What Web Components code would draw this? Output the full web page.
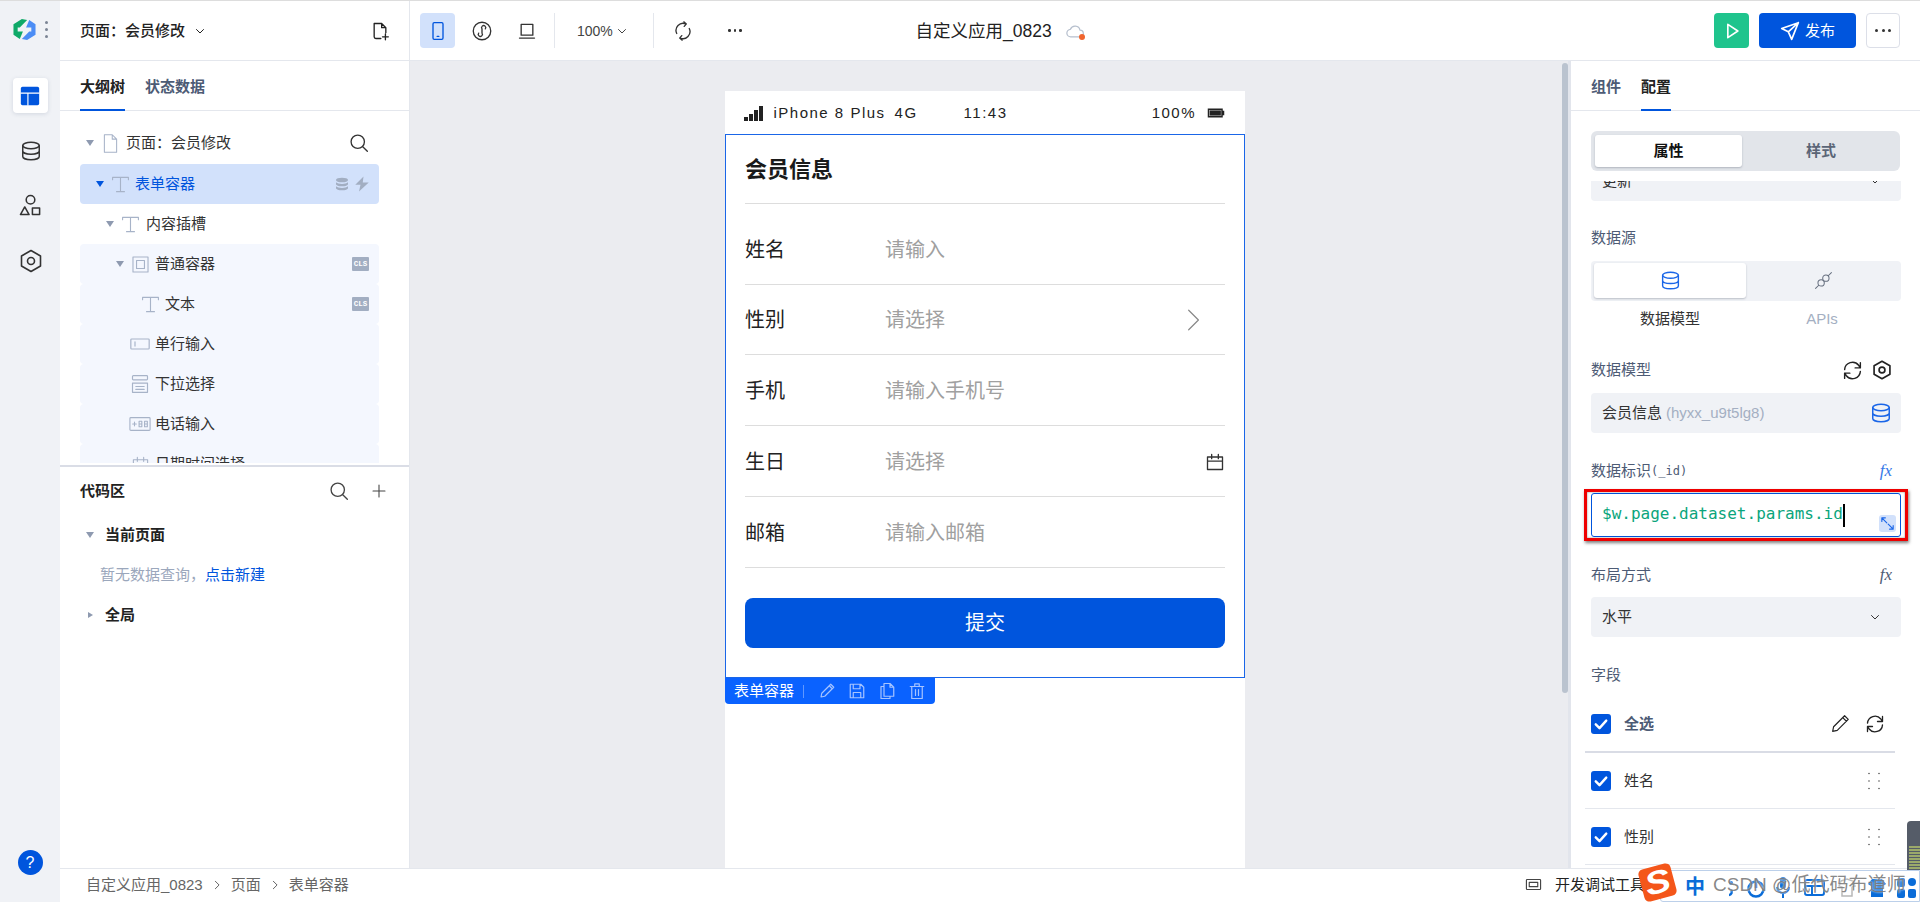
<!DOCTYPE html>
<html lang="zh">
<head>
<meta charset="utf-8">
<title>自定义应用_0823</title>
<style>
  html, body { margin: 0; height: 100%; overflow: hidden; background: #fff; }
  body { font: 15px/20px "Liberation Sans", "Noto Sans CJK SC", sans-serif; color: #222; }
</style>
</head>
<body>
<ide-app></ide-app>

<script>
// icon set, all on a 24x24 box
const ICONS = {
  layout: '<rect x="1" y="1" width="22" height="22" rx="2" fill="#0055dd" stroke="none"/><path d="M1 8.5H23M9.5 8.5V23" stroke="#fff" stroke-width="1.4"/>',
  db: '<ellipse cx="12" cy="6" rx="9" ry="3.5"/><path d="M3 6v12c0 2 4 3.5 9 3.5s9-1.5 9-3.5V6M3 12c0 2 4 3.5 9 3.5s9-1.5 9-3.5"/>',
  dbfill: '<g fill="currentColor" stroke="none"><ellipse cx="12" cy="6" rx="9" ry="3.5"/><path d="M3 9.5c2 2 5 2.5 9 2.5s7-.5 9-2.5V12c0 2-4 3.5-9 3.5S3 14 3 12zM3 15.5c2 2 5 2.5 9 2.5s7-.5 9-2.5V18c0 2-4 3.5-9 3.5S3 20 3 18z"/></g>',
  shapes: '<circle cx="12" cy="6" r="4.5"/><path d="M6 13.5l4.5 8h-9zM14 14.5h7.5v7H14z"/>',
  hex: '<path d="M12 1.5l9.500 5.500v10L12 22.500 2.500 17V7z"/><circle cx="12" cy="12" r="3.500"/>',
  fileplus: '<path d="M13 21H7a2 2 0 0 1-2-2V3h9l5 5v6M14 3v5h5M15 19h7M18.5 15.5v7"/>',
  file: '<path d="M5 2h9l5 5v15H5zM14 2v5h5"/>',
  search: '<circle cx="10.5" cy="10.5" r="8"/><path d="M16.5 16.5L22 22"/>',
  plus: '<path d="M12 3v18M3 12h18"/>',
  down: '<path d="M5 9l7 7 7-7"/>',
  right: '<path d="M8 3l9 9-9 9"/>',
  tee: '<path d="M2 6V3h20v3M12 3v18M7 21h10"/>',
  box: '<rect x="2.5" y="2.5" width="19" height="19"/><rect x="7" y="7" width="10" height="10"/>',
  input: '<rect x="1" y="6" width="22" height="12" rx="1"/><path d="M6 9.5v5"/>',
  select: '<rect x="3" y="2" width="18" height="5" rx="1"/><path d="M3 11h18v11H3zM7 15h10M7 18.500h10"/>',
  tel: '<rect x="1" y="5" width="22" height="14" rx="1"/><path d="M4 12h4M6 10v4M11 9h3v6h-3zM11 12h3M17 9h3v6h-3zM17 12h3"/>',
  date: '<path d="M3 6h18v15H3zM3 11h18M8 3v5M16 3v5"/>',
  bolt: '<path fill="currentColor" stroke="none" d="M14 2L3 13h7l-2 9 13-12h-8z"/>',
  phone: '<rect x="6" y="2" width="12" height="20" rx="1.5"/><path d="M11 18.5h2"/>',
  applet: '<circle cx="12" cy="12" r="10.5"/><path d="M8 14.5a2.500 2.500 0 1 0 4 0V9.500a2.500 2.500 0 1 1 4 0"/>',
  laptop: '<path d="M5 4h14v13H5zM3 20.500h18"/>',
  refresh: '<path d="M4.500 15a8.500 8.500 0 0 1 11-11.500M19.500 9a8.500 8.500 0 0 1-11 11.500M13 1l3 2.500-2.500 3M11 23l-3-2.500 2.500-3"/>',
  sync: '<path d="M3 11a9 9 0 0 1 16-5l2 3M21 13a9 9 0 0 1-16 5l-2-3M21 3v6h-6M3 21v-6h6"/>',
  cloud: '<path d="M7 19a4.500 4.500 0 0 1-.5-9 6 6 0 0 1 11.500 1 4 4 0 0 1 0 8z"/>',
  play: '<path d="M7 4l12 8-12 8z"/>',
  send: '<path d="M22 2L2 9l8 4 4 9zM22 2L10 13"/>',
  link: '<circle cx="9" cy="15" r="4"/><circle cx="15" cy="9" r="4"/><path d="M2 22l4-4M18 6l4-4"/>',
  expand: '<path d="M4 4l7 7M4 4v5M4 4h5M20 20l-7-7M20 20v-5M20 20h-5"/>',
  pencil: '<path d="M4 20l1-5L17 3l4 4L9 19zM15 5l4 4"/>',
  save: '<path d="M3 3h14l4 4v14H3zM7 3v6h9V3M7 21v-7h10v7"/>',
  copy: '<path d="M8 2h8l5 5v12H8zM16 2v5h5M8 6H4v16h12v-3"/>',
  trash: '<path d="M3 6h18M9 6V2.500h6V6M5 6v16h14V6M10 10v8M14 10v8"/>',
  grip: '<g fill="currentColor" stroke="none"><circle cx="6" cy="3" r=".9"/><circle cx="18" cy="3" r=".9"/><circle cx="6" cy="12" r=".9"/><circle cx="18" cy="12" r=".9"/><circle cx="6" cy="21" r=".9"/><circle cx="18" cy="21" r=".9"/></g>',
  check: '<path d="M5 12.500l5 5 9-10" stroke="#fff" stroke-width="3.200"/>',
  debug: '<rect x="2" y="5" width="20" height="14" rx="1"/><path d="M6 9h12v6H6z"/>',
  battery: '<path fill="currentColor" stroke="none" d="M1 6h20v3h2v6h-2v3H1zM3 8v8h16V8z"/><rect x="3.500" y="8.500" width="15" height="7" fill="currentColor" stroke="none"/>'
};

class UiIcon extends HTMLElement {
  connectedCallback() {
    const size = this.getAttribute('size') || 20;
    const weight = this.getAttribute('weight') || 1.6;
    const name = this.getAttribute('name');
    this.attachShadow({ mode: 'open' }).innerHTML = `
      <style>:host { display: inline-flex; flex: none; width: ${size}px; height: ${size}px; } svg { display: block; width: 100%; height: 100%; }</style>
      <svg viewBox="0 0 24 24" fill="none" stroke="currentColor" stroke-width="${weight}" stroke-linejoin="round" stroke-linecap="round">${ICONS[name] || ''}</svg>`;
  }
}

// left icon column
class IdeRail extends HTMLElement {
  connectedCallback() {
    this.attachShadow({ mode: 'open' }).innerHTML = `
      <style>
        :host { display: flex; flex-direction: column; align-items: center; background: #f0f2f6; border-top: 1px solid #dddddd; box-sizing: border-box; height: 100%; color: #333; padding-top: 17px; }
        .logo { display: flex; align-items: center; gap: 8px; height: 22px; }
        .dots { display: flex; flex-direction: column; gap: 4px; }
        .dots i { width: 3px; height: 3px; border-radius: 50%; background: #7b8494; }
        .tile { width: 35px; height: 35px; margin-top: 38px; background: #fff; border-radius: 4px; box-shadow: 0 1px 4px rgba(40,60,100,.15); display: flex; align-items: center; justify-content: center; }
        .item { margin-top: 18px; height: 37px; display: flex; align-items: center; margin-left: 1px; }
        .tile + .item { margin-top: 19px; }
        .help { margin-top: auto; margin-bottom: 27px; width: 25px; height: 25px; border-radius: 50%; background: #0055dd; color: #fff; text-align: center; font-size: 16px; line-height: 25px; }
      </style>
      <div class="logo">
        <svg width="25" height="21" viewBox="0 0 23 20">
          <path fill="#4c8df5" d="M22 5V15L14 20L9 19L16 12H18V8H13L16 1Z"/>
          <path fill="#0fa968" d="M1 5L9 0L14 1L7 8H5V12H10L7 19L1 15Z"/>
        </svg>
        <span class="dots"><i></i><i></i><i></i></span>
      </div>
      <div class="tile"><ui-icon name="layout" size="20"></ui-icon></div>
      <div class="item"><ui-icon name="db" size="22"></ui-icon></div>
      <div class="item"><ui-icon name="shapes" size="23"></ui-icon></div>
      <div class="item"><ui-icon name="hex" size="24"></ui-icon></div>
      <div class="help">?</div>`;
  }
}

class IdeTopbar extends HTMLElement {
  connectedCallback() {
    this.attachShadow({ mode: 'open' }).innerHTML = `
      <style>
        :host { display: flex; align-items: center; box-sizing: border-box; height: 61px; background: #fff; border-top: 1px solid #dddddd; border-bottom: 1px solid #e4e7ed; color: #333; }
        .page { display: flex; align-items: center; width: 350px; height: 100%; box-sizing: border-box; border-right: 1px solid #e4e7ed; padding: 0 19px 0 20px; font-weight: 500; color: #222; }
        .page span { margin-right: 9px; }
        .page .add { margin-left: auto; }
        .tools { display: flex; align-items: center; padding-left: 10px; }
        .on { width: 35px; height: 35px; background: #d2e1fb; border-radius: 4px; display: flex; align-items: center; justify-content: center; color: #0055dd; }
        .sep { width: 1px; height: 35px; background: #e4e7ed; }
        .zoom { display: flex; align-items: center; gap: 3px; width: 98px; padding-left: 22px; box-sizing: border-box; font-size: 14px; color: #444; }
        .more { display: flex; gap: 3px; }
        .more i { width: 2.500px; height: 2.500px; border-radius: 50%; background: currentColor; }
        h1 { margin: 0 0 0 174px; font-size: 17.500px; font-weight: 400; color: #222; white-space: nowrap; }
        .cloud { position: relative; margin-left: 13px; color: #b6bfcd; display: flex; }
        .cloud i { position: absolute; right: 0; bottom: 1px; width: 6px; height: 6px; border-radius: 50%; background: #f0652f; }
        .actions { margin-left: auto; display: flex; align-items: center; padding-right: 20px; gap: 10px; }
        .run, .pub, .dots { height: 35px; box-sizing: border-box; border-radius: 4px; display: flex; align-items: center; justify-content: center; }
        .run { width: 35px; background: #1fc48d; color: #fff; }
        .pub { width: 97px; background: #0055dd; color: #fff; gap: 5px; }
        .dots { width: 34px; border: 1px solid #dcdfe8; color: #333; }
      </style>
      <div class="page"><span>页面：会员修改</span><ui-icon name="down" size="12" weight="2"></ui-icon><ui-icon class="add" name="fileplus" size="20"></ui-icon></div>
      <div class="tools">
        <div class="on"><ui-icon name="phone" size="20"></ui-icon></div>
        <ui-icon name="applet" size="20" style="margin-left:17px"></ui-icon>
        <ui-icon name="laptop" size="20" style="margin-left:25px"></ui-icon>
        <div class="sep" style="margin-left:17px"></div>
        <div class="zoom">100%<ui-icon name="down" size="12" weight="2"></ui-icon></div>
        <div class="sep"></div>
        <ui-icon name="refresh" size="20" style="margin-left:19px"></ui-icon>
        <div class="more" style="margin-left:35px"><i></i><i></i><i></i></div>
      </div>
      <h1>自定义应用_0823</h1>
      <div class="cloud"><ui-icon name="cloud" size="20" weight="1.500"></ui-icon><i></i></div>
      <div class="actions">
        <div class="run"><ui-icon name="play" size="20" weight="2"></ui-icon></div>
        <div class="pub"><ui-icon name="send" size="20" weight="2"></ui-icon>发布</div>
        <div class="dots"><div style="display:flex;gap:3.500px"><i style="width:3px;height:3px;border-radius:50%;background:#333"></i><i style="width:3px;height:3px;border-radius:50%;background:#333"></i><i style="width:3px;height:3px;border-radius:50%;background:#333"></i></div></div>
      </div>`;
  }
}

// one line of the outline tree
class TreeRow extends HTMLElement {
  connectedCallback() {
    const pad = this.getAttribute('pad') || 0;
    const box = this.getAttribute('box') || 30;
    const icon = this.getAttribute('icon');
    const caret = this.hasAttribute('caret');
    this.attachShadow({ mode: 'open' }).innerHTML = `
      <style>
        :host { display: flex; align-items: center; height: 40px; border-radius: 4px; padding-left: ${pad}px; color: #333; }
        :host([kind="sel"]) { background: #d2e1fb; color: #0055dd; }
        :host([kind="sub"]) { background: #f4f7fe; }
        .caret { width: 10px; flex: none; display: flex; justify-content: center; }
        .caret i { border: 4px solid transparent; border-top: 6px solid #8e9ab0; border-bottom: 0; border-left-width: 4.500px; border-right-width: 4.500px; }
        :host([kind="sel"]) .caret i { border-top-color: #0055dd; }
        .ic { width: ${box}px; flex: none; display: flex; justify-content: center; color: #a7b3c8; }
        .end { margin-left: auto; display: flex; align-items: center; gap: 3px; padding-right: 10px; color: #a2aec2; }
      </style>
      <span class="caret">${caret ? '<i></i>' : ''}</span>
      <span class="ic"><ui-icon name="${icon}" size="${this.getAttribute('size') || 19}" weight="${this.getAttribute('weight') || 1.400}"></ui-icon></span>
      <slot></slot>
      <span class="end"><slot name="end"></slot></span>`;
  }
}

class ClsBadge extends HTMLElement {
  connectedCallback() {
    this.attachShadow({ mode: 'open' }).innerHTML = `
      <style>:host { display: block; width: 17px; height: 14px; border-radius: 1px; background: #a2aec2; color: #fff; font: bold 7.500px/14px "Liberation Mono", monospace; text-align: center; }</style>CLS`;
  }
}

class OutlinePanel extends HTMLElement {
  connectedCallback() {
    this.attachShadow({ mode: 'open' }).innerHTML = `
      <style>
        :host { display: flex; flex-direction: column; background: #fff; border-right: 1px solid #e4e7ed; min-height: 0; overflow: hidden; }
        .tabs { display: flex; gap: 20px; height: 50px; box-sizing: border-box; padding: 0 20px; border-bottom: 1px solid #e4e7ed; flex: none; }
        .tabs span { line-height: 52px; font-weight: 700; color: #4d5b75; height: 50px; box-sizing: border-box; }
        .tabs .on { color: #222; border-bottom: 2px solid #0055dd; }
        .tree { height: 352px; overflow: hidden; flex: none; padding: 12px 30px 0 20px; box-sizing: border-box; }
        .tree tree-row[first] { margin-bottom: 1px; }
        .code { flex: 1; margin-top: 2px; border-top: 2px solid #dadde6; }
        .code-head { display: flex; align-items: center; height: 48px; padding: 0 22px 0 20px; font-weight: 700; color: #222; }
        .code-head .s { margin-left: auto; color: #444; }
        .line { display: flex; align-items: center; height: 40px; padding-left: 25px; font-weight: 700; color: #222; }
        .line i { flex: none; width: 10px; display: flex; justify-content: center; margin-right: 10px; }
        .tri { border-left: 4.500px solid transparent; border-right: 4.500px solid transparent; border-top: 6px solid #8e9ab0; }
        .side { border-top: 3.500px solid transparent; border-bottom: 3.500px solid transparent; border-left: 5px solid #8e9ab0; }
        .empty { height: 40px; line-height: 40px; padding-left: 40px; color: #9ba7bc; }
        .empty b { font-weight: 400; color: #0055dd; }
      </style>
      <div class="tabs"><span class="on">大纲树</span><span>状态数据</span></div>
      <div class="tree">
        <tree-row first pad="5" box="31" caret icon="file" size="21" weight="1.200">页面：会员修改<ui-icon slot="end" name="search" size="20" style="color:#333"></ui-icon></tree-row>
        <tree-row kind="sel" pad="15" caret icon="tee">表单容器<ui-icon slot="end" name="dbfill" size="16"></ui-icon><ui-icon slot="end" name="bolt" size="18" style="margin-right:-2px"></ui-icon></tree-row>
        <tree-row pad="25" box="31" caret icon="tee">内容插槽</tree-row>
        <tree-row kind="sub" pad="35" caret icon="box">普通容器<cls-badge slot="end"></cls-badge></tree-row>
        <tree-row kind="sub" pad="45" icon="tee">文本<cls-badge slot="end"></cls-badge></tree-row>
        <tree-row kind="sub" pad="35" icon="input" size="20">单行输入</tree-row>
        <tree-row kind="sub" pad="35" icon="select" size="20">下拉选择</tree-row>
        <tree-row kind="sub" pad="35" icon="tel" size="22" weight="1.200">电话输入</tree-row>
        <tree-row kind="sub" pad="35" icon="date" size="19">日期时间选择</tree-row>
      </div>
      <div class="code">
        <div class="code-head">代码区<ui-icon class="s" name="search" size="20"></ui-icon><ui-icon name="plus" size="16" style="margin-left:22px;color:#444"></ui-icon></div>
        <div class="line"><i><span class="tri"></span></i>当前页面</div>
        <div class="empty">暂无数据查询，<b>点击新建</b></div>
        <div class="line"><i><span class="side"></span></i>全局</div>
      </div>`;
  }
}

class FormField extends HTMLElement {
  connectedCallback() {
    const h = this.getAttribute('h') || 71;
    const top = this.getAttribute('top') || 2;
    this.attachShadow({ mode: 'open' }).innerHTML = `
      <style>
        :host { display: flex; align-items: center; box-sizing: border-box; height: ${h}px; padding-top: ${top}px; border-bottom: 1px solid #dddddd; font-size: 20px; color: #222; }
        .name { width: 140px; }
        .hint { color: #a0a0a0; }
        ::slotted(*) { margin-left: auto; }
      </style>
      <span class="name">${this.getAttribute('name')}</span>
      <span class="hint">${this.getAttribute('hint')}</span>
      <slot></slot>`;
  }
}

class PhoneForm extends HTMLElement {
  connectedCallback() {
    this.attachShadow({ mode: 'open' }).innerHTML = `
      <style>
        :host { display: block; width: 520px; flex: none; background: #fff; color: #222; }
        .status { display: flex; align-items: center; height: 43px; padding: 1px 20px 0 19px; box-sizing: border-box; font-size: 15px; letter-spacing: 1.500px; color: #222; }
        .bars { display: flex; align-items: flex-end; gap: 1.500px; margin-right: 11px; height: 15px; }
        .bars i { width: 3.500px; background: #222; }
        .form { box-sizing: border-box; height: 544px; border: 1px solid #1a66e8; padding: 0 19px; }
        .title { height: 69px; box-sizing: border-box; border-bottom: 1px solid #dddddd; font-size: 22px; line-height: 69px; font-weight: 700; color: #1a1a1a; }
        .submit { margin-top: 30px; height: 50px; border-radius: 8px; background: #0055dd; color: #fff; font-size: 20px; line-height: 50px; text-align: center; }
        .bar { display: flex; align-items: center; width: 210px; height: 26px; box-sizing: border-box; padding-left: 9px; background: #0a62ff; border-radius: 0 0 4px 4px; color: #fff; white-space: nowrap; }
        .bar s { width: 1px; height: 13px; background: rgba(255,255,255,.35); margin: 0 14px 0 9px; }
        .bar ui-icon { color: #a6c4ff; margin-right: 12px; }
        .bar ui-icon:last-child { margin-right: 0; }
      </style>
      <div class="status">
        <span class="bars"><i style="height:4px"></i><i style="height:7px"></i><i style="height:11px"></i><i style="height:15px"></i></span>
        <span>iPhone 8 Plus</span><span style="margin-left:9px">4G</span><span style="margin-left:46px">11:43</span>
        <span style="margin-left:auto">100%</span><ui-icon name="battery" size="18" style="margin-left:11px"></ui-icon>
      </div>
      <div class="form">
        <div class="title">会员信息</div>
        <form-field h="81" top="11" name="姓名" hint="请输入"></form-field>
        <form-field h="70" top="1" name="性别" hint="请选择"><ui-icon name="right" size="26" weight="1.100" style="color:#888;margin-right:19px"></ui-icon></form-field>
        <form-field name="手机" hint="请输入手机号"></form-field>
        <form-field name="生日" hint="请选择"><ui-icon name="date" size="20" style="color:#333"></ui-icon></form-field>
        <form-field top="1" name="邮箱" hint="请输入邮箱"></form-field>
        <div class="submit">提交</div>
      </div>
      <div class="bar">表单容器<s></s><ui-icon name="pencil" size="18"></ui-icon><ui-icon name="save" size="18"></ui-icon><ui-icon name="copy" size="18"></ui-icon><ui-icon name="trash" size="18"></ui-icon></div>`;
  }
}

class CanvasStage extends HTMLElement {
  connectedCallback() {
    this.attachShadow({ mode: 'open' }).innerHTML = `
      <style>
        :host { display: flex; justify-content: center; position: relative; background: #ebecf0; padding: 30px 11px 0 0; overflow: hidden; min-height: 0; }
        .thumb { position: absolute; top: 2px; right: 3px; width: 6px; height: 630px; border-radius: 3px; background: #bac3cf; }
        .edge { position: absolute; top: 0; bottom: 0; right: 0; width: 3px; background: #e2e5ec; }
      </style>
      <phone-form></phone-form><div class="edge"></div><div class="thumb"></div>`;
  }
}

// label line + control, used all over the config panel
class ConfigLabel extends HTMLElement {
  connectedCallback() {
    this.attachShadow({ mode: 'open' }).innerHTML = `
      <style>
        :host { display: flex; align-items: center; height: 20px; color: #4d5b75; }
        .end { margin-left: auto; display: flex; align-items: center; gap: 9px; padding-right: 9px; }
      </style>
      <slot></slot><span class="end"><slot name="end"></slot></span>`;
  }
}

class FieldRow extends HTMLElement {
  connectedCallback() {
    this.attachShadow({ mode: 'open' }).innerHTML = `
      <style>
        :host { display: flex; align-items: center; box-sizing: border-box; height: 56px; margin-left: -6px; width: 310px; padding: 0 10px 0 6px; border-bottom: 1px solid #e4e7ed; color: #333; }
        :host([head]) { color: #4d5b75; font-weight: 700; border-bottom: 2px solid #d9dce5; }
        .box { width: 20px; height: 20px; border-radius: 3px; background: #0055dd; margin-right: 13px; display: flex; align-items: center; justify-content: center; }
        .end { margin-left: auto; display: flex; align-items: center; gap: 14px; }
      </style>
      <span class="box"><ui-icon name="check" size="18"></ui-icon></span>
      <slot></slot><span class="end"><slot name="end"></slot></span>`;
  }
}

class ConfigPanel extends HTMLElement {
  connectedCallback() {
    this.attachShadow({ mode: 'open' }).innerHTML = `
      <style>
        :host { display: flex; flex-direction: column; background: #fff; min-height: 0; overflow: hidden; color: #333; }
        .tabs { display: flex; gap: 20px; height: 50px; box-sizing: border-box; padding: 0 20px; border-bottom: 1px solid #e4e7ed; flex: none; }
        .tabs span { line-height: 52px; font-weight: 700; color: #4d5b75; height: 50px; box-sizing: border-box; }
        .tabs .on { color: #222; border-bottom: 2px solid #0055dd; }
        .mode { flex: none; margin: 20px 20px 10px; width: 309px; height: 40px; box-sizing: border-box; padding: 4px 0 4px 4px; background: #e2e5ea; border-radius: 6px; display: flex; font-weight: 700; color: #5b6577; }
        .mode span { flex: 1; text-align: center; line-height: 32px; }
        .mode .on { flex: none; width: 147px; background: #fff; border-radius: 3px; color: #111; box-shadow: 0 1px 2px rgba(60,70,90,.3); }
        .scroll { flex: 1; overflow: hidden; padding: 0 19px 0 20px; min-height: 0; }
        .sel, .ctl { display: flex; align-items: center; height: 40px; box-sizing: border-box; padding: 0 11px; border-radius: 4px; background: #f0f2f6; color: #333; }
        .sel ui-icon, .ctl ui-icon { margin-left: auto; }
        .sel ui-icon { margin-right: 9px; }
        .tag { color: #a4afc2; margin-left: 4px; }
        .seg { display: flex; height: 40px; box-sizing: border-box; background: #f0f2f6; border-radius: 4px; padding: 2px 0 3px 3px; }
        .seg span { flex: 1; display: flex; align-items: center; justify-content: center; color: #666f7f; }
        .seg .on { flex: none; width: 152px; background: #fff; border-radius: 3px; color: #1a66e8; box-shadow: 0 1px 2px rgba(60,70,90,.3); }
        .caps { display: flex; margin-top: 8px; height: 20px; }
        .caps span { flex: 1; text-align: center; }
        .caps .off { color: #a4afc2; padding-right: 6px; }
        .fx { font: italic 17px/20px "Liberation Serif", serif; color: #4d5b75; }
        .mono { font: 12px/20px "DejaVu Sans Mono", monospace; }
        .code { position: relative; margin-top: 12px; }
        .code .frame { box-sizing: border-box; height: 44px; border: 1px solid #0055dd; border-radius: 3px; padding: 10px 10px 0; font: 16px/20px "DejaVu Sans Mono", monospace; color: #0aa57c; background: #fff; display: flex; align-items: flex-start; }
        .code .caret { width: 2px; height: 23px; background: #000; margin-left: 0; }
        .code .ring { position: absolute; inset: -4px -7px; border: 3px solid #ee0000; box-shadow: 1px 2px 3px rgba(0,0,0,.5), inset 0 0 2px rgba(0,0,0,.5); pointer-events: none; }
        .code .grow { position: absolute; right: 5px; bottom: 5px; width: 17px; height: 17px; border-radius: 3px; background: #d2e1fb; color: #1a66e8; display: flex; }
      </style>
      <div class="tabs"><span>组件</span><span class="on">配置</span></div>
      <div class="mode"><span class="on">属性</span><span>样式</span></div>
      <div class="scroll">
        <div class="sel" style="margin-top:-20px">更新<ui-icon name="down" size="12" weight="2"></ui-icon></div>
        <config-label style="margin-top:27px">数据源</config-label>
        <div class="seg" style="margin-top:13px"><span class="on"><ui-icon name="db" size="21"></ui-icon></span><span><ui-icon name="link" size="19" weight="1.300"></ui-icon></span></div>
        <div class="caps"><span style="flex:none;width:158px">数据模型</span><span class="off">APIs</span></div>
        <config-label style="margin-top:31px">数据模型<ui-icon slot="end" name="sync" size="21" style="color:#222"></ui-icon><ui-icon slot="end" name="hex" size="20" weight="2" style="color:#222"></ui-icon></config-label>
        <div class="ctl" style="margin-top:13px">会员信息<span class="tag">(hyxx_u9t5lg8)</span><ui-icon name="db" size="22" style="color:#1a66e8;margin-right:-2px"></ui-icon></div>
        <config-label style="margin-top:28px">数据标识<span class="mono">(_id)</span><span slot="end" class="fx" style="color:#3478e8">fx</span></config-label>
        <div class="code"><div class="frame"><span>$w.page.dataset.params.id</span><i class="caret"></i></div><span class="grow"><ui-icon name="expand" size="17"></ui-icon></span><div class="ring"></div></div>
        <config-label style="margin-top:28px">布局方式<span slot="end" class="fx">fx</span></config-label>
        <div class="sel" style="margin-top:12px">水平<ui-icon name="down" size="12" weight="2"></ui-icon></div>
        <config-label style="margin-top:28px">字段</config-label>
        <div style="margin-top:12px">
          <field-row head>全选<ui-icon slot="end" name="pencil" size="22" weight="1.300" style="color:#222"></ui-icon><ui-icon slot="end" name="sync" size="20" style="color:#222"></ui-icon></field-row>
          <field-row>姓名<ui-icon slot="end" name="grip" size="20" style="color:#444;margin-right:1px"></ui-icon></field-row>
          <field-row>性别<ui-icon slot="end" name="grip" size="20" style="color:#444;margin-right:1px"></ui-icon></field-row>
        </div>
      </div>`;
  }
}

class IdeStatusbar extends HTMLElement {
  connectedCallback() {
    this.attachShadow({ mode: 'open' }).innerHTML = `
      <style>
        :host { display: flex; align-items: center; box-sizing: border-box; height: 34px; padding: 0 275px 2px 26px; background: #fff; border-top: 1px solid #e4e7ed; color: #666; }
        ui-icon.g { margin: 0 9px; color: #666; }
        .tail { margin-left: auto; display: flex; align-items: center; gap: 13px; color: #222; }
      </style>
      <span>自定义应用_0823</span><ui-icon class="g" name="right" size="10" weight="2.400"></ui-icon>
      <span>页面</span><ui-icon class="g" name="right" size="10" weight="2.400"></ui-icon>
      <span>表单容器</span>
      <span class="tail"><ui-icon name="debug" size="17" style="color:#444"></ui-icon>开发调试工具</span>`;
  }
}

// input-method bar, watermark and the level meter sit on top of the app
class ImeOverlay extends HTMLElement {
  connectedCallback() {
    const blue = '#0a6cd8';
    this.attachShadow({ mode: 'open' }).innerHTML = `
      <style>
        :host { position: absolute; left: 0; top: 0; width: 1920px; height: 902px; pointer-events: none; display: block; }
        .meter { position: absolute; left: 1907px; top: 821px; width: 13px; height: 49px; background: #555c68; border-radius: 4px 0 0 0; display: flex; flex-direction: column; justify-content: flex-end; gap: 1px; padding: 0 0 1px 2px; box-sizing: border-box; }
        .meter i { height: 2px; width: 11px; background: #9ba96a; }
        .bar { position: absolute; left: 1660px; top: 870px; width: 260px; height: 32px; box-sizing: border-box; background: #fff; border: 1px solid #bcd0ea; border-radius: 3px 0 0 3px; }
        .s { position: absolute; left: 1641px; top: 866px; width: 33px; height: 33px; border-radius: 5px; background: #f4561a; transform: rotate(-15deg); color: #fff; font: italic 900 32px/33px "Liberation Sans", sans-serif; text-align: center; }
        .s span { display: inline-block; transform: scaleX(1.2); }
        .zh { position: absolute; left: 1685px; top: 874px; font: bold 20px/24px "Noto Sans CJK SC", sans-serif; color: ${blue}; }
        .ico { position: absolute; top: 876px; left: 1726px; }
        .wm { position: absolute; left: 1713px; top: 872px; font-size: 19px; line-height: 26px; color: rgba(105,105,105,.8); text-shadow: 0 0 2px #fff; white-space: nowrap; }
      </style>
      <div class="meter"><i></i><i></i><i></i><i></i><i></i><i></i><i></i><i></i></div>
      <div class="bar"></div>
      <div class="s"><span>S</span></div>
      <div class="zh">中</div>
      <svg class="ico" width="194" height="24" viewBox="0 0 194 24" fill="none" stroke="${blue}" stroke-width="2.500">
        <circle cx="5" cy="7" r="2" fill="${blue}" stroke="none"/><path d="M5 14c2 2 0 5-2 5" />
        <circle cx="30" cy="13" r="7.500"/><path d="M30 3v9" />
        <g transform="translate(-4)"><rect x="58" y="1" width="6" height="12" rx="3" fill="${blue}" stroke="none"/><path d="M55 11a6 6 0 0 0 12 0M61 17v5" stroke-width="2"/></g>
        <g transform="translate(-4)"><rect x="83" y="4" width="19" height="15" rx="2" stroke-width="2"/><path d="M83 10h19M90 10v9" stroke-width="2"/></g>
        <path d="M115 5l6-2 6 2 2 5-3 1v9h-10v-9l-3-1z" stroke="#b8b8b8" stroke-width="1.500"/>
        <g transform="translate(2)"><path d="M144 3h10l4 5-3 2v11h-12V10l-3-2z" fill="${blue}" stroke="none"/></g>
        <g transform="translate(4)" fill="${blue}" stroke="none"><rect x="167" y="2" width="8" height="9" rx="2"/><rect x="178" y="2" width="8" height="8" rx="4"/><rect x="167" y="13" width="8" height="9" rx="2"/><rect x="178" y="13" width="8" height="9" rx="2"/></g>
      </svg>
      <div class="wm">CSDN @低代码布道师</div>`;
  }
}

class IdeApp extends HTMLElement {
  connectedCallback() {
    this.attachShadow({ mode: 'open' }).innerHTML = `
      <style>
        :host { display: grid; position: relative; width: 1920px; height: 902px; overflow: hidden; grid-template-columns: 60px 350px 1fr 349px; grid-template-rows: 61px 1fr 34px; }
        ide-rail { grid-row: 1 / 4; }
        ide-topbar { grid-column: 2 / 5; }
        ide-statusbar { grid-column: 2 / 5; }
      </style>
      <ide-rail></ide-rail>
      <ide-topbar></ide-topbar>
      <outline-panel></outline-panel>
      <canvas-stage></canvas-stage>
      <config-panel></config-panel>
      <ide-statusbar></ide-statusbar>
      <ime-overlay></ime-overlay>`;
  }
}

customElements.define('ui-icon', UiIcon);
customElements.define('ide-rail', IdeRail);
customElements.define('ide-topbar', IdeTopbar);
customElements.define('tree-row', TreeRow);
customElements.define('cls-badge', ClsBadge);
customElements.define('outline-panel', OutlinePanel);
customElements.define('form-field', FormField);
customElements.define('phone-form', PhoneForm);
customElements.define('canvas-stage', CanvasStage);
customElements.define('config-label', ConfigLabel);
customElements.define('field-row', FieldRow);
customElements.define('config-panel', ConfigPanel);
customElements.define('ide-statusbar', IdeStatusbar);
customElements.define('ime-overlay', ImeOverlay);
customElements.define('ide-app', IdeApp);
</script>
</body>
</html>
